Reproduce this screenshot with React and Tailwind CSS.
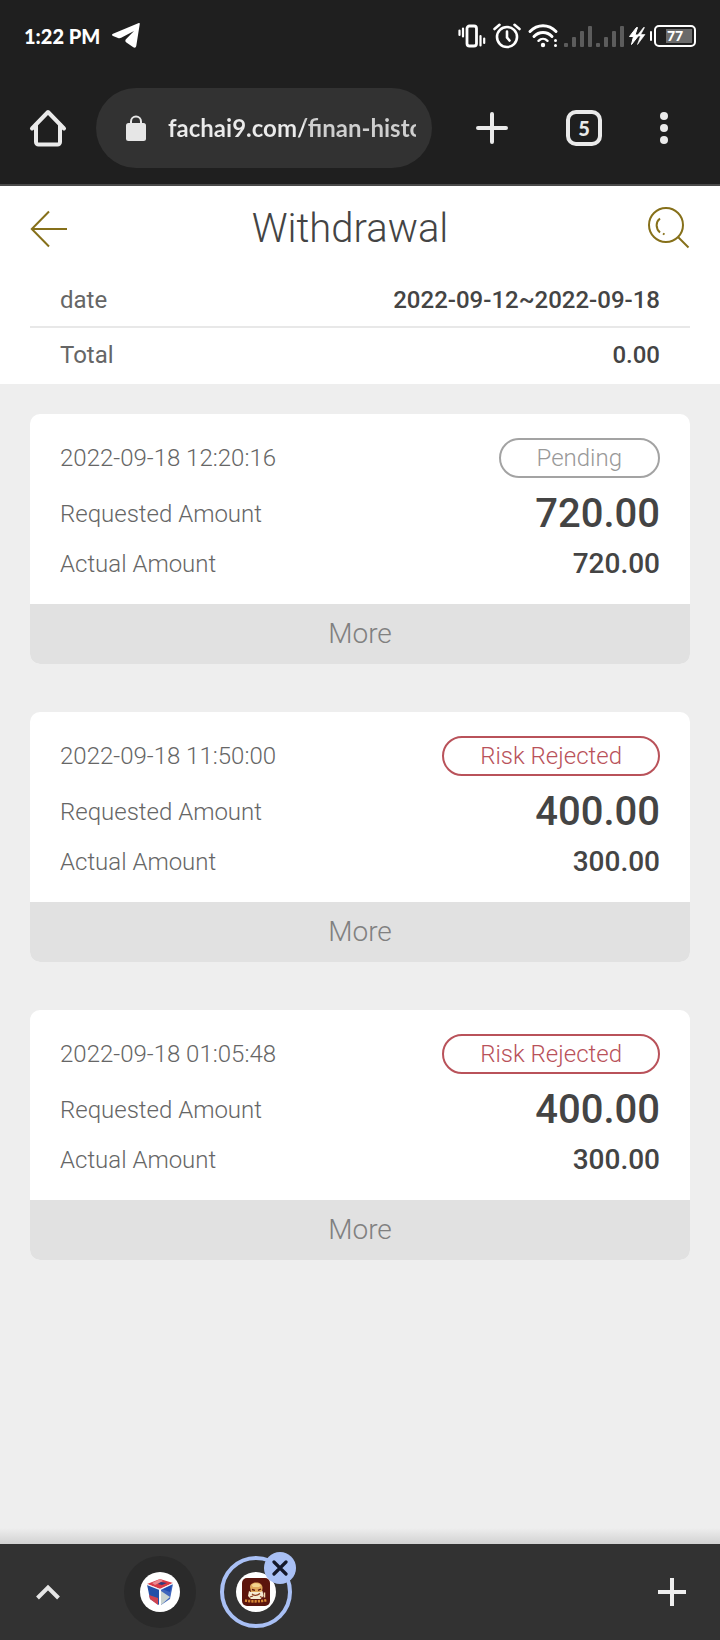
import { useState } from 'react';
import clsx from 'clsx';

const withdrawals = [
  { id: 1, time: '2022-09-18 12:20:16', status: 'Pending', requested: '720.00', actual: '720.00' },
  { id: 2, time: '2022-09-18 11:50:00', status: 'Risk Rejected', requested: '400.00', actual: '300.00' },
  { id: 3, time: '2022-09-18 01:05:48', status: 'Risk Rejected', requested: '400.00', actual: '300.00' },
];

function SignalIcon() {
  return (
    <svg width="28" height="24" viewBox="0 0 28 24" fill="#5c5c5c">
      <rect x="0" y="19" width="4" height="4" rx="1" />
      <rect x="8" y="13" width="4" height="10" rx="1" />
      <rect x="16" y="7" width="4" height="16" rx="1" />
      <rect x="24" y="2" width="4" height="21" rx="1" />
    </svg>
  );
}

function StatusBar() {
  return (
    <div className="flex h-18 items-center justify-between px-6 font-['Lato',sans-serif] text-white">
      <div className="flex items-center gap-3">
        <span className="text-xl leading-6 font-black">1:22 PM</span>
        <svg width="28" height="26" viewBox="0 0 28 26" fill="#fff">
          <path d="M27.800.8 24.300 22.800c-.3 1.900-1.600 2.400-3 1.500l-6.900-4.800c-1.400-1-1.400-2.200-.2-3.400L22 8 9.200 14.800c-1.200.6-2.200.6-3.200.2L1 13c-1.300-.5-1.300-1.800 0-2.300L26.200.3c1.100-.4 1.700-.3 1.600.5z" />
        </svg>
      </div>
      <div className="flex items-center gap-1">
        <svg width="30" height="24" viewBox="0 0 30 24" fill="none" stroke="#fff" strokeLinecap="round">
          <rect x="9" y="2" width="9.500" height="20" rx="2.5" strokeWidth="2.800" />
          <path d="M1.500 6.500v4.500M5 4.500v8M22.500 12v9.500M26.200 14.500v4.500" strokeWidth="2.200" />
        </svg>
        <svg width="30" height="26" viewBox="0 0 30 26" fill="none" stroke="#fff" strokeLinecap="round">
          <circle cx="15" cy="14" r="10" strokeWidth="2.600" />
          <path d="M15 8.500v6l2.500 3" strokeWidth="2.600" />
          <path d="M2.500 6 7.500 1.800M27.500 6l-5-4.200" strokeWidth="2.600" />
        </svg>
        <svg width="34" height="26" viewBox="0 0 34 26" fill="none" stroke="#fff" strokeLinecap="round">
          <path d="M4 8.500C11.500.8 22.500.8 30 8.500" strokeWidth="3" />
          <path d="M8 13.500c5-5.300 13-5.300 18 0" strokeWidth="3" />
          <path d="M12.500 17.800c2.600-2.600 6.400-2.600 9 0" strokeWidth="2.400" />
          <circle cx="17" cy="22" r="2.200" fill="#fff" stroke="none" />
          <path d="M29.500 17.500v.1M29.500 22.500v.1" strokeWidth="3" />
        </svg>
        <SignalIcon />
        <SignalIcon />
        <svg width="18" height="18" viewBox="0 0 18 18" fill="#fff">
          <path d="M8.500.5 1.500 9.500h4L3.500 17.500l7.500-9.500H7L9.500.5z" stroke="#fff" />
          <path d="M15.500.5 9 9h3.500l-3 8.500L17 7.500h-4.300L16.500.5z" stroke="#fff" strokeWidth=".6" />
        </svg>
        <div className="flex items-center gap-0.5">
          <span className="h-2.5 w-0.5 rounded-full bg-white" />
          <div className="flex h-[22px] w-[42px] items-center rounded-[5px] border-2 border-white p-0.5">
            <span className="flex h-full w-full items-center justify-center bg-linear-to-r from-transparent from-25% to-[#6b6b6b] to-25% text-sm leading-4 font-black">
              77
            </span>
          </div>
        </div>
      </div>
    </div>
  );
}

function BrowserToolbar() {
  return (
    <div className="flex h-28 items-center pr-2">
      <button aria-label="Home" className="flex w-24 justify-center">
        <svg width="38" height="38" viewBox="0 0 38 38" fill="none" stroke="#eaeaea" strokeWidth="4" strokeLinejoin="round" strokeLinecap="round">
          <path d="M3 19.500 19 3l16 16.500" />
          <path d="M7 16v17a2.500 2.500 0 0 0 2.500 2.500h19A2.500 2.500 0 0 0 31 33V16" />
        </svg>
      </button>
      <div className="flex h-20 min-w-0 flex-1 items-center gap-[22px] rounded-full bg-[#323232] pr-4 pl-[30px]">
        <svg className="shrink-0" width="20" height="26" viewBox="0 0 20 26">
          <path d="M5 10V6.500a5 5 0 0 1 10 0V10" fill="none" stroke="#e6e6e6" strokeWidth="2" />
          <rect x="0" y="8" width="20" height="18" rx="2.500" fill="#e6e6e6" />
        </svg>
        <input
          type="text"
          aria-label="Address"
          readOnly
          value="fachai9.com/finan-history"
          className="w-full min-w-0 bg-linear-to-r from-[#ebebeb] from-55% to-[#cfcfcf] to-55% bg-clip-text font-['Lato',sans-serif] text-2xl leading-8 font-bold text-transparent outline-none"
        />
      </div>
      <button aria-label="New tab" className="flex w-30 justify-center">
        <svg width="32" height="32" viewBox="0 0 32 32" stroke="#eaeaea" strokeWidth="4" strokeLinecap="round">
          <path d="M16 2v28M2 16h28" />
        </svg>
      </button>
      <button aria-label="Open tabs" className="flex w-16 justify-center">
        <span className="flex size-9 items-center justify-center rounded-[10px] border-4 border-[#eaeaea] font-['Lato',sans-serif] text-xl leading-5 font-black text-[#eaeaea]">
          5
        </span>
      </button>
      <button aria-label="Menu" className="flex w-24 justify-center">
        <svg width="8" height="32" viewBox="0 0 8 32" fill="#eaeaea">
          <circle cx="4" cy="4" r="4" />
          <circle cx="4" cy="16" r="4" />
          <circle cx="4" cy="28" r="4" />
        </svg>
      </button>
    </div>
  );
}

function PageHeader() {
  return (
    <header className="bg-white px-[30px] text-[#666]">
      <div className="flex h-[86px] items-center justify-between">
        <button aria-label="Back" className="flex w-[30px]">
          <svg className="shrink-0" width="38" height="38" viewBox="0 0 38 38" fill="none" stroke="#86701a" strokeWidth="2">
            <path d="M37 19H2M19 1.500 1.800 19 19 36.500" />
          </svg>
        </button>
        <h1 className="text-[40px] leading-12 font-light text-[#444]">Withdrawal</h1>
        <button aria-label="Search" className="flex w-[50px] justify-end">
          <svg width="42" height="44" viewBox="0 0 42 44" fill="none" stroke="#86701a" strokeWidth="2">
            <circle cx="18" cy="18" r="17" />
            <path d="m30 30 10.500 10.500" />
            <path d="M12 11.500c-4.500 3.500-4.500 10 0 14" />
            <path d="M15 26.500l1.500 1" />
          </svg>
        </button>
      </div>
      <dl className="text-2xl">
        <div className="flex h-14 items-center justify-between border-b-2 border-[#e8e8e8] px-[30px] pt-0.5">
          <dt>date</dt>
          <dd className="font-medium text-[#444]">2022-09-12~2022-09-18</dd>
        </div>
        <div className="flex h-14 items-center justify-between px-[30px] pb-0.5">
          <dt>Total</dt>
          <dd className="font-medium text-[#444]">0.00</dd>
        </div>
      </dl>
    </header>
  );
}

function WithdrawalCard({ item }) {
  const [expanded, setExpanded] = useState(false);

  return (
    <article className="overflow-hidden rounded-[10px] bg-white">
      <div className="px-[30px] pt-6 pb-4 text-2xl font-light text-[#666]">
        <div className="flex items-center justify-between">
          <time>{item.time}</time>
          <span
            className={clsx(
              'flex h-10 items-center rounded-full border-2 px-9',
              item.status === 'Pending' ? 'border-[#a3a3a3] text-[#999]' : 'border-[#b9525a] text-[#b9525a]'
            )}
          >
            {item.status}
          </span>
        </div>
        <dl className="mt-3 flex flex-col gap-0.5">
          <div className="flex h-12 items-center justify-between">
            <dt>Requested Amount</dt>
            <dd className="text-[40px] leading-12 font-medium text-[#444]">{item.requested}</dd>
          </div>
          <div className="flex h-12 items-center justify-between">
            <dt>Actual Amount</dt>
            <dd className="text-[28px] leading-12 font-medium text-[#444]">{item.actual}</dd>
          </div>
        </dl>
      </div>
      <button
        aria-expanded={expanded}
        onClick={() => setExpanded(!expanded)}
        className="h-15 w-full bg-[#e1e1e1] text-[28px] leading-8 font-light text-[#808080]"
      >
        More
      </button>
    </article>
  );
}

function TabStrip() {
  return (
    <nav className="flex h-24 items-center bg-[#323232]">
      <button aria-label="Expand tabs" className="flex w-24 justify-center">
        <svg width="24" height="16" viewBox="0 0 24 16" fill="none" stroke="#e6e6e6" strokeWidth="4">
          <path d="M1.500 14 12 3.500 22.500 14" />
        </svg>
      </button>
      <div className="flex flex-1 gap-6 pl-7">
        <button aria-label="First tab" className="flex size-18 items-center justify-center rounded-full bg-[#2a2a2a]">
          <span className="flex size-10 items-center justify-center rounded-full bg-white">
            <svg width="28" height="28" viewBox="0 0 28 28">
              <path d="M1 6 14 1l13 4-13 6z" fill="#d93a45" />
              <path d="m6 5 8-4 3 2-8 4z" fill="#e98a90" />
              <path d="m15 4 6 1-5 2-4-1z" fill="#2c3d80" />
              <path d="M1 6.500 13 11v16L4 21z" fill="#2450a8" />
              <path d="m3 17 9 3v7l-8-6z" fill="#d04450" />
              <path d="M15 11 27 6l-3 15-9 6z" fill="#3f66bd" />
              <path d="m15 13 9 6-9 8z" fill="#c9d3cf" />
              <path d="m16 11 10-5-2 8z" fill="#1e4bb0" />
              <path d="M1 6.500 14 11.500 27 5.500" fill="none" stroke="#f4f4f4" strokeWidth="1.200" />
            </svg>
          </span>
        </button>
        <div className="relative">
          <button aria-label="Current tab" className="flex size-18 items-center justify-center rounded-full border-4 border-[#a9c0f5]">
            <span className="flex size-10 items-center justify-center rounded-full bg-white">
              <svg width="28" height="28" viewBox="0 0 28 28">
                <rect width="28" height="28" rx="5" fill="#5c150d" />
                <path d="M8 9c0-3 3-4.500 6-4.500 4 0 6.500 2 6.500 5.500l-.5 4-5 1-6-1z" fill="#e0a85c" />
                <path d="M9.500 7c3-2.500 7-2 9.500.5l-2 1.500h-6z" fill="#f3d48e" />
                <path d="M10 11.500l3 .8M19 11l-3 1.300" stroke="#5c150d" strokeWidth="1.300" />
                <path d="M7 13c2 1.500 4 1 6.500 1s5 .5 7-1l1 5-3 3H9l-3-3z" fill="#f5ead2" />
                <path d="M10 16c3 2.500 5 2 8-.5M8 19l3-1M18 18.500l2 1" fill="none" stroke="#8a3a1c" strokeWidth="1.200" />
                <path d="M22.500 14.500v5" stroke="#f0dcae" strokeWidth="1.500" />
                <path d="M3 22.500c7 1.200 15 1.200 22-.5" fill="none" stroke="#d98a35" strokeWidth="2.600" strokeDasharray="2.200 1" />
              </svg>
            </span>
          </button>
          <button aria-label="Close tab" className="absolute -top-1 -right-1 flex size-8 items-center justify-center rounded-full bg-[#a9c0f5]">
            <svg width="16" height="16" viewBox="0 0 16 16" stroke="#14182b" strokeWidth="3.200" strokeLinecap="round">
              <path d="m2 2 12 12M14 2 2 14" />
            </svg>
          </button>
        </div>
      </div>
      <button aria-label="Add tab" className="flex w-24 justify-center">
        <svg width="28" height="28" viewBox="0 0 28 28" stroke="#efefef" strokeWidth="4">
          <path d="M14 0v28M0 14h28" />
        </svg>
      </button>
    </nav>
  );
}

function App() {
  return (
    <div className="flex min-h-screen flex-col bg-[#eee] font-['Roboto',sans-serif]">
      <div className="border-b-2 border-[#4a4a4a] bg-[#1f1f1f]">
        <StatusBar />
        <BrowserToolbar />
      </div>
      <PageHeader />
      <main className="flex flex-1 flex-col gap-12 px-[30px] pt-[30px] pb-12">
        {withdrawals.map((item) => (
          <WithdrawalCard key={item.id} item={item} />
        ))}
      </main>
      <div className="h-4 bg-linear-to-b from-[#eee] to-[#d2d2d2]" />
      <TabStrip />
    </div>
  );
}

export default App;
